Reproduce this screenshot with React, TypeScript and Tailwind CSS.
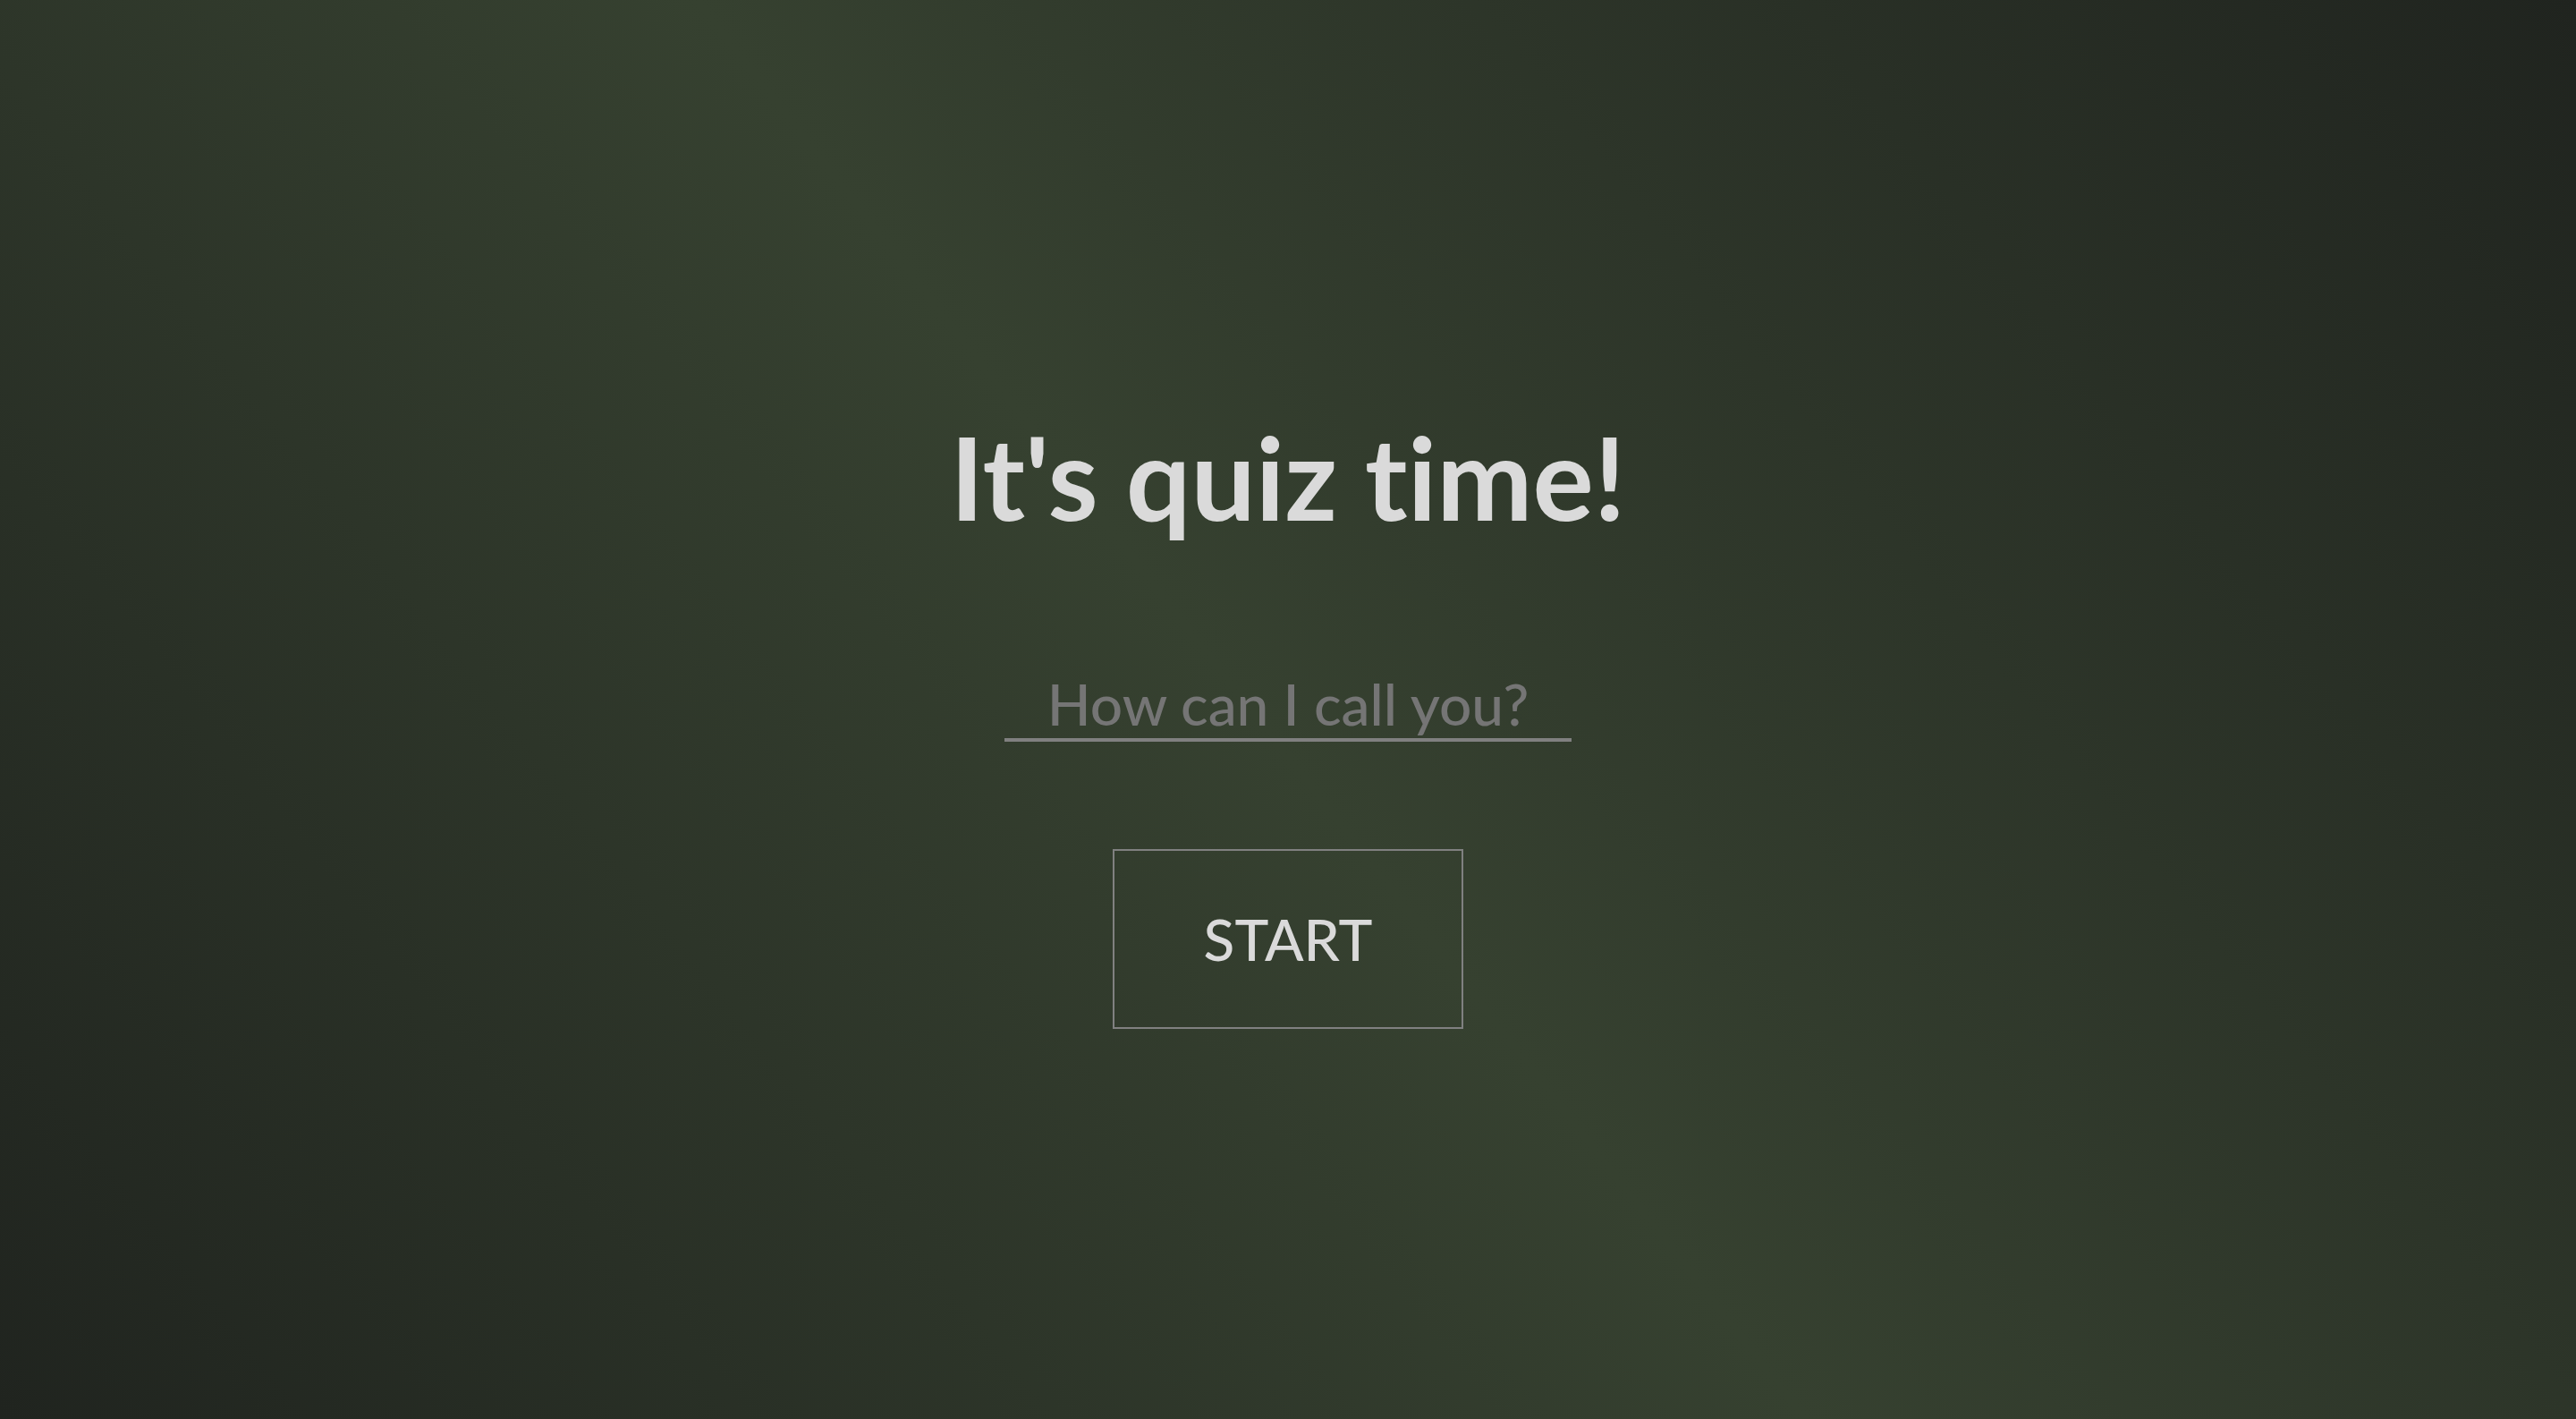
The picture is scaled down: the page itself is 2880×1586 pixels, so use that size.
import { useState } from "react";

export default function App() {
  const [name, setName] = useState("");

  return (
    <main className="flex min-h-screen flex-col items-center justify-center bg-[linear-gradient(52deg,#20241f,#364130_49%,#20241f)] px-5 pt-5 font-[Lato,sans-serif] font-medium text-[#dadada] [font-variant-ligatures:none]">
      <h1 className="text-center text-[128px] leading-[154px] font-bold">It's quiz time!</h1>
      <form
        className="mt-[138px] flex flex-col items-center gap-[120px]"
        onSubmit={(event) => event.preventDefault()}
      >
        <input
          type="text"
          aria-label="How can I call you?"
          placeholder="How can I call you?"
          value={name}
          onChange={(event) => setName(event.target.value)}
          className="w-[634px] max-w-full border-b-4 border-[#808080] bg-transparent text-center text-[64px] leading-[77px] outline-none placeholder:text-[#757575]"
        />
        <button
          type="submit"
          className="border-2 border-[#808080] px-[100px] py-[60px] text-[64px] leading-[77px]"
        >
          START
        </button>
      </form>
    </main>
  );
}
